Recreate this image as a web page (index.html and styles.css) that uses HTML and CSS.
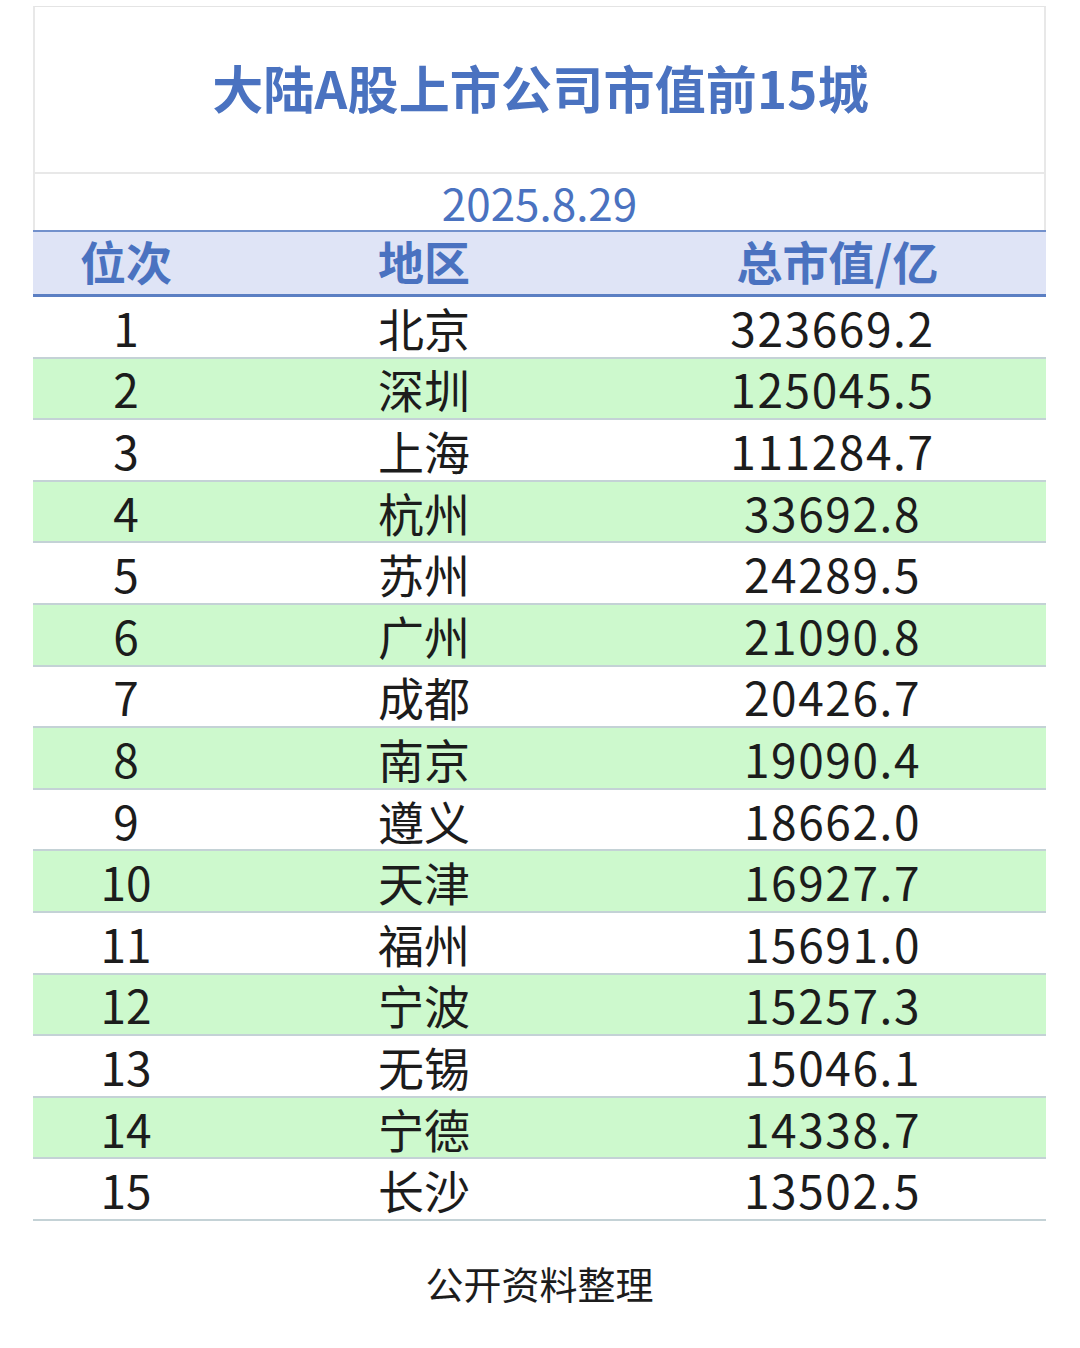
FILE: index.html
```html
<!DOCTYPE html>
<html lang="zh">
<head>
<meta charset="utf-8">
<title>大陆A股上市公司市值前15城</title>
<link rel="stylesheet" href="styles.css">
</head>
<body>
<div class="sheet">
  <div class="title-cell"><h1 class="title">大陆A股上市公司市值前15城</h1></div>
  <div class="date-cell">2025.8.29</div>
  <div class="row head">
    <div class="c1">位次</div><div class="c2">地区</div><div class="c3">总市值/亿</div>
  </div>
  <div class="row"><div class="c1">1</div><div class="c2">北京</div><div class="c3">323669.2</div></div>
  <div class="row alt"><div class="c1">2</div><div class="c2">深圳</div><div class="c3">125045.5</div></div>
  <div class="row"><div class="c1">3</div><div class="c2">上海</div><div class="c3">111284.7</div></div>
  <div class="row alt"><div class="c1">4</div><div class="c2">杭州</div><div class="c3">33692.8</div></div>
  <div class="row"><div class="c1">5</div><div class="c2">苏州</div><div class="c3">24289.5</div></div>
  <div class="row alt"><div class="c1">6</div><div class="c2">广州</div><div class="c3">21090.8</div></div>
  <div class="row"><div class="c1">7</div><div class="c2">成都</div><div class="c3">20426.7</div></div>
  <div class="row alt"><div class="c1">8</div><div class="c2">南京</div><div class="c3">19090.4</div></div>
  <div class="row"><div class="c1">9</div><div class="c2">遵义</div><div class="c3">18662.0</div></div>
  <div class="row alt"><div class="c1">10</div><div class="c2">天津</div><div class="c3">16927.7</div></div>
  <div class="row"><div class="c1">11</div><div class="c2">福州</div><div class="c3">15691.0</div></div>
  <div class="row alt"><div class="c1">12</div><div class="c2">宁波</div><div class="c3">15257.3</div></div>
  <div class="row"><div class="c1">13</div><div class="c2">无锡</div><div class="c3">15046.1</div></div>
  <div class="row alt"><div class="c1">14</div><div class="c2">宁德</div><div class="c3">14338.7</div></div>
  <div class="row"><div class="c1">15</div><div class="c2">长沙</div><div class="c3">13502.5</div></div>
  <div class="footer">公开资料整理</div>
</div>
</body>
</html>
```
FILE: styles.css
```css
html, body {
  margin: 0;
  padding: 0;
  background: #ffffff;
}
body {
  font-family: "Noto Sans CJK SC", "Noto Sans", sans-serif;
  color: #1c1c1c;
}
.sheet {
  width: 1013px;
  margin: 6px 0 0 33px;
}
.title-cell {
  box-sizing: border-box;
  height: 166px;
  border-top: 1px solid #e4e4e4;
  border-left: 2px solid #e8e8e8;
  border-right: 2px solid #e8e8e8;
  display: flex;
  align-items: center;
  justify-content: center;
  padding-bottom: 4px;
}
.title {
  margin: 0;
  font-size: 51px;
  font-weight: 700;
  color: #4a72c0;
  line-height: 1;
  letter-spacing: 0.2px;
  padding-left: 2px;
}
.date-cell {
  box-sizing: border-box;
  height: 58px;
  border-top: 2px solid #e8e8e8;
  border-left: 2px solid #e8e8e8;
  border-right: 2px solid #e8e8e8;
  display: flex;
  align-items: center;
  justify-content: center;
  font-size: 44px;
  color: #4a72c0;
  line-height: 1;
}
.row {
  box-sizing: border-box;
  height: 61.6px;
  display: grid;
  grid-template-columns: 186px 410px 1fr;
  align-items: center;
  border-bottom: 2px solid #c4d2d6;
  font-size: 46px;
  line-height: 1;
}
.row > div {
  text-align: center;
}
.row .c3 {
  padding-right: 10px;
  letter-spacing: 1.6px;
}
.row.alt {
  background: #cdf9cd;
}
.row.head {
  height: 67px;
  background: #dfe4f6;
  border-top: 2px solid #7391cc;
  border-bottom: 3px solid #5b7fc3;
  color: #4a72c0;
  font-weight: 700;
  padding-bottom: 6px;
}
.row.head .c3 {
  padding-right: 0;
  letter-spacing: 0;
}
.footer {
  height: 124px;
  display: flex;
  align-items: center;
  justify-content: center;
  font-size: 38px;
  color: #1c1c1c;
  line-height: 1;
}
```
